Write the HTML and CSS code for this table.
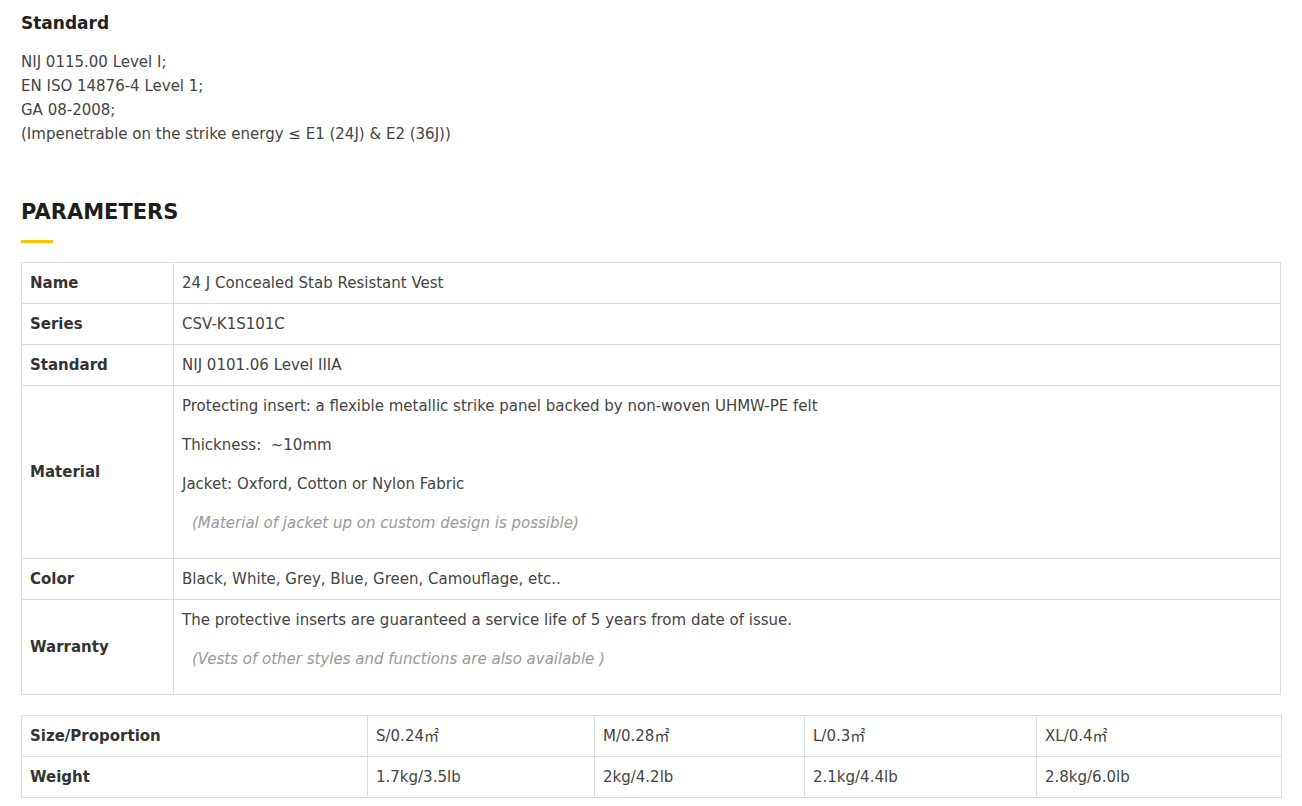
FILE: index.html
```html
<!DOCTYPE html>
<html lang="en">
<head>
<meta charset="utf-8">
<title>Parameters</title>
<link rel="stylesheet" href="styles.css">
</head>
<body>
<div class="page">
  <section class="standard">
    <h3 class="std-title">Standard</h3>
    <p class="std-text">NIJ 0115.00 Level I;<br>EN ISO 14876-4 Level 1;<br>GA 08-2008;<br>(Impenetrable on the strike energy ≤ E1 (24J) &amp; E2 (36J))</p>
  </section>

  <section class="params">
    <h2 class="params-title">PARAMETERS</h2>
    <div class="params-bar"></div>

    <table class="spec">
      <colgroup><col class="spec-label"><col></colgroup>
      <tr><th>Name</th><td>24 J Concealed Stab Resistant Vest</td></tr>
      <tr><th>Series</th><td>CSV-K1S101C</td></tr>
      <tr><th>Standard</th><td>NIJ 0101.06 Level IIIA</td></tr>
      <tr><th>Material</th><td>
        <p>Protecting insert: a flexible metallic strike panel backed by non-woven UHMW-PE felt</p>
        <p>Thickness:&nbsp; ~10mm</p>
        <p>Jacket: Oxford, Cotton or Nylon Fabric</p>
        <p class="note">(Material of jacket up on custom design is possible)</p>
      </td></tr>
      <tr><th>Color</th><td>Black, White, Grey, Blue, Green, Camouflage, etc..</td></tr>
      <tr><th>Warranty</th><td>
        <p>The protective inserts are guaranteed a service life of 5 years from date of issue.</p>
        <p class="note">(Vests of other styles and functions are also available )</p>
      </td></tr>
    </table>

    <table class="sizes">
      <colgroup><col class="c1"><col class="c2"><col class="c3"><col class="c4"><col class="c5"></colgroup>
      <tr><th>Size/Proportion</th><td>S/0.24<span class="unit">㎡</span></td><td>M/0.28<span class="unit">㎡</span></td><td>L/0.3<span class="unit">㎡</span></td><td>XL/0.4<span class="unit">㎡</span></td></tr>
      <tr><th>Weight</th><td>1.7kg/3.5lb</td><td>2kg/4.2lb</td><td>2.1kg/4.4lb</td><td>2.8kg/6.0lb</td></tr>
    </table>
  </section>
</div>
</body>
</html>
```

FILE: styles.css
```css
* { box-sizing: border-box; }
html, body { margin: 0; padding: 0; background: #fff; }
body {
  font-family: "DejaVu Sans", "Open Sans", "Noto Sans CJK SC", sans-serif;
  color: #444;
  font-size: 15px;
  line-height: 24px;
}
.page { padding: 11px 21px 0 21px; }

.std-title {
  margin: 0 0 15px 0;
  font-size: 17px;
  line-height: 24px;
  font-weight: 700;
  color: #222;
}
.std-text { margin: 0; color: #444; }

.params { margin-top: 51px; }
.params-title {
  margin: 0;
  font-size: 21px;
  line-height: 30px;
  font-weight: 700;
  color: #1e1e1e;
}
.params-bar {
  width: 32px;
  height: 3px;
  background: #f7c500;
  margin-top: 13px;
  margin-bottom: 19px;
}

table {
  width: 1260px;
  border-collapse: collapse;
  table-layout: fixed;
}
th, td {
  border: 1px solid #dddddd;
  padding: 8px 8px;
  text-align: left;
  vertical-align: middle;
  font-size: 15px;
  line-height: 24px;
}
th { font-weight: 700; color: #333; }
td { font-weight: 400; color: #444; }
td p { margin: 0 0 15px 0; }

.spec-label { width: 152px; }
.note { font-style: italic; color: #999; padding-left: 10px; }

.unit { line-height: 0; }

.sizes { margin-top: 20px; }
.sizes .c1 { width: 346px; }
.sizes .c2 { width: 227px; }
.sizes .c3 { width: 210px; }
.sizes .c4 { width: 232px; }
.sizes .c5 { width: 245px; }
```
